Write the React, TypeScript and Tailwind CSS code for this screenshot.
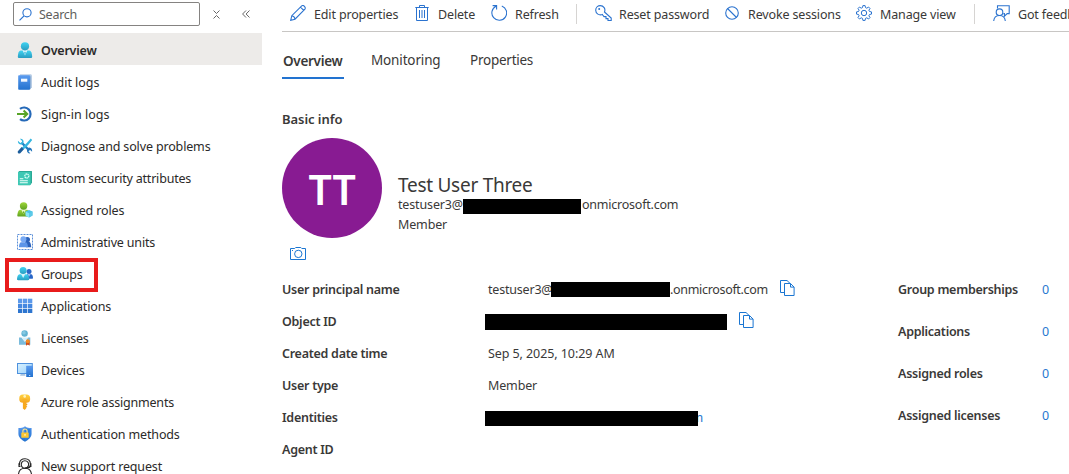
import React from "react";

type IconProps = { children: React.ReactNode; w?: number; h?: number };

function Svg({ children, w = 16, h = 16 }: IconProps) {
  return (
    <svg width={w} height={h} viewBox={`0 0 ${w} ${h}`} fill="none" className="block shrink-0">
      {children}
    </svg>
  );
}

const BLUE = "#2b73cf";

function Gradients() {
  return (
    <svg width="0" height="0" className="absolute">
      <defs>
        <linearGradient id="cyan" x1="0" y1="0" x2="0" y2="1">
          <stop offset="0" stopColor="#3fd3f2" />
          <stop offset="1" stopColor="#2a9cc0" />
        </linearGradient>
        <linearGradient id="blue" x1="0" y1="0" x2="0" y2="1">
          <stop offset="0" stopColor="#5b9bef" />
          <stop offset="1" stopColor="#2272cf" />
        </linearGradient>
        <linearGradient id="green" x1="0" y1="0" x2="0" y2="1">
          <stop offset="0" stopColor="#9fd63a" />
          <stop offset="1" stopColor="#5ea11f" />
        </linearGradient>
        <linearGradient id="gold" x1="0" y1="0" x2="0" y2="1">
          <stop offset="0" stopColor="#ffd23f" />
          <stop offset="1" stopColor="#f5a623" />
        </linearGradient>
        <linearGradient id="screen" x1="0" y1="0" x2="1" y2="1">
          <stop offset="0" stopColor="#d9f1ff" />
          <stop offset="1" stopColor="#9ad2fb" />
        </linearGradient>
      </defs>
    </svg>
  );
}

const UserIcon = () => (
  <Svg>
    <path d="M3.600 8.500h8.800c1.600 0 2.600 2.500 2.800 5.900 0 .9-.6 1.600-1.500 1.600H2.300C1.400 16 .8 15.300.8 14.400 1 11 2 8.500 3.600 8.500Z" fill="url(#cyan)" />
    <path d="M5.600 8.300 8 13.500l2.400-5.200Z" fill="#e3f7fc" />
    <path d="m8 9.500-.8 1 .8 3 .8-3Z" fill="#35b5d8" />
    <circle cx="8" cy="4.300" r="4.100" fill="url(#cyan)" />
  </Svg>
);

const BookIcon = () => (
  <Svg>
    <path d="M3 .3h11.400v12.900L13 15.500H3Z" fill="#b7cde6" />
    <path d="M13 2.500 14.500 1v12.500L13 15.500Z" fill="#8fb0d6" />
    <rect x="1.200" y="1.300" width="11.800" height="14.500" rx=".8" fill="url(#blue)" />
    <rect x="4" y="4.700" width="6.300" height="3" fill="#f2f8ff" />
  </Svg>
);

const SignInIcon = () => (
  <Svg>
    <path d="M3 2.900A6.500 6.500 0 1 1 3 13.100" stroke="#2569b8" strokeWidth="2.200" />
    <path d="M0 8h9.600M6.600 4.500 10.200 8l-3.600 3.500" stroke="#58a428" strokeWidth="2.100" />
  </Svg>
);

const ToolsIcon = () => (
  <Svg>
    <path d="m4.500 4.500 7.800 8" stroke="#237fc2" strokeWidth="2.400" />
    <path d="M.9 2.700 3.300 5l1.500-.4L5.100 3 2.900.8C4.900.3 6.900 1.700 6.600 4.300L5.300 6.200C3 7 .5 5.300.9 2.700Z" fill="#32b5df" />
    <path d="m10.300 10.200 2-.6c2 .2 3.200 2 2.800 4.200L13.200 12l-1.400.3-.2 1.400 1.900 1.600c-2 .5-3.600-.8-3.500-2.800Z" fill="#2376bb" />
    <path d="M13.700.6 15.200 2l-3.600 4.400-5 5L4.800 9.700l5.200-5Z" fill="#36b7e0" />
    <path d="m4.600 9 2.300 2.300-3.600 3.900c-1.400 1.200-3.600-.8-2.200-2.300Z" fill="#1d5d9b" />
  </Svg>
);

const AttributesIcon = () => (
  <Svg>
    <path d="M2.300 1h12.200c.3 0 .5.200.5.500v11.300L13 15.200H1.500L1 14.500V2.300Z" fill="#2aa995" />
    <path d="M1 2h12.600v13H1Z" fill="#3ec8b4" />
    <circle cx="9.800" cy="6" r="2" stroke="#d9fff8" strokeWidth="1.300" strokeDasharray="1.400 .4" />
    <path d="M2.800 8.700h3.500M2.800 10.700h8M2.800 12.700h8" stroke="#effffc" strokeWidth="1.100" />
  </Svg>
);

const RolesIcon = () => (
  <Svg>
    <path d="M3 7.800h7.200c1.500 0 2.400 2.200 2.800 6.700H1.400c-.8 0-1.200-.5-1.100-1.300C.7 10 1.500 7.800 3 7.800Z" fill="url(#green)" />
    <path d="m4.300 7.700 2.300 4.500 2.200-4.500Z" fill="#eafbcf" />
    <path d="m6.600 9-.7 1 .7 2.200.7-2.200Z" fill="#65a924" />
    <circle cx="6.600" cy="4" r="3.700" fill="url(#green)" />
    <path d="m12 8 3.500 1.500v4L12 15.500l-3.400-2v-4Z" fill="#4cc4e6" />
    <path d="m8.600 9.500 3.400 1.700v4.300l-3.400-2Z" fill="#8ae4f5" />
    <path d="m12 11.200 3.500-1.700v4L12 15.500Z" fill="#5dc9e8" />
  </Svg>
);

const UnitsIcon = () => (
  <Svg>
    <rect x=".5" y=".5" width="15" height="15" stroke="#5a8fd8" strokeDasharray="2 1" />
    <circle cx="10.300" cy="5.600" r="2.700" fill="#2b62bb" />
    <path d="M8 7.800h4.500c1.200 1 1.600 3 1.700 5.400H9Z" fill="#2b62bb" />
    <circle cx="6.400" cy="5.300" r="3" fill="#78aaf4" />
    <path d="M3.700 8.200h5.500c1.400 1.200 1.600 3 1.700 5H2c0-2.300.4-3.800 1.700-5Z" fill="#5c95e8" />
  </Svg>
);

const GroupsIcon = () => (
  <Svg>
    <circle cx="12" cy="5.500" r="2.500" fill="#2966c7" />
    <path d="M10 8.200h4.200c1 0 1.700 1.500 1.800 3.500 0 .6-.4 1-.9 1H10Z" fill="#2966c7" />
    <path d="m10.800 8.200 1.300 2.500 1.200-2.500Z" fill="#b5d4fb" />
    <path d="M2.600 8.200h7c1.500 0 2.500 2.300 2.600 4.900 0 .8-.4 1.200-1.200 1.200H1.200c-.8 0-1.200-.4-1.200-1.200C.1 10.500 1 8.200 2.600 8.200Z" fill="url(#cyan)" />
    <path d="m4 8.100 2.200 4 2.100-4Z" fill="#d5f5fc" />
    <circle cx="6.100" cy="4.600" r="3.500" fill="url(#cyan)" />
  </Svg>
);

const AppsIcon = () => (
  <Svg>
    {[0, 1, 2].map((r) =>
      [0, 1, 2].map((c) => (
        <rect key={`${r}${c}`} x={1 + c * 5} y={0.7 + r * 5} width="4.300" height="4.300" fill={["#5b99eb", "#4487e0", "#2d75cf"][r]} />
      )),
    )}
  </Svg>
);

const LicensesIcon = () => (
  <Svg>
    <path d="M2 7.500h2.500L8 12l3-4.500h2.300v7.300H2Z" fill="#7abbdc" />
    <path d="M4.200 7.500h6.800L7.700 11.400Z" fill="#d6effa" />
    <circle cx="7.600" cy="3.500" r="3.200" fill="#62b3d3" />
    <circle cx="7" cy="2.800" r="1.800" fill="#85c9e2" />
    <path d="M9 10.500h3.600v5.200L10.800 14.600 9 15.700Z" fill="#d34b16" />
    <circle cx="10.800" cy="11.200" r="2" fill="#f28b23" />
  </Svg>
);

const DevicesIcon = () => (
  <Svg>
    <path d="M4 11.500h4l.5 2.300H3Z" fill="#aac5df" />
    <rect x=".5" y="1.500" width="14.800" height="10" fill="url(#screen)" stroke="#4e91de" />
    <rect x="9.200" y="3.700" width="6.800" height="11.300" rx=".5" fill="url(#blue)" />
    <path d="M12 13.500h1.300" stroke="#b8d6fc" />
  </Svg>
);

const KeyIcon = () => (
  <Svg>
    <path d="M5.900 8h3.500v6l-1.700 2-1.800-1.600Z" fill="#f7a91e" />
    <path d="M9 9.800h1.300v1.100H9v.8h1.100v1H9Z" fill="#f0a01c" />
    <rect x="2.300" y=".5" width="10.800" height="8.300" rx="3.600" fill="url(#gold)" />
    <path d="M5.500 7.500h4.300M5.500 5.800h4.300" stroke="#f8a91e" strokeWidth=".8" />
    <circle cx="7.700" cy="2.400" r="1.300" fill="#fff3c0" />
  </Svg>
);

const ShieldIcon = () => (
  <Svg>
    <path d="M8 .3c1.800 1.500 4 1.800 6.600 1.800v5.500c0 4-3.200 6.300-6.600 8.100C4.500 13.900 1.400 11.600 1.400 7.600V2.100C4 2.100 6.200 1.800 8 .3Z" fill="url(#blue)" />
    <path d="M8 1.600c1.600 1.100 3.500 1.500 5.500 1.600v4.400c0 3.200-2.600 5.200-5.500 6.800Z" fill="#2f7fdd" />
    <path d="M5.900 7V5.100a2.100 2.100 0 0 1 4.200 0V7" stroke="#ffe489" strokeWidth="1.100" />
    <rect x="4.300" y="6.500" width="7.400" height="5.300" rx=".5" fill="#fbc632" />
    <circle cx="8" cy="8.900" r=".8" fill="#fff4ca" />
  </Svg>
);

const SupportIcon = () => (
  <Svg>
    <g stroke="#262626" strokeWidth="1.100">
      <path d="M2.500 7.300V5.200C2.900 2.400 5 .8 8 .8c3.300 0 5.400 2 5.400 5.300v.8c0 2-1 3-3 3H8.300" />
      <path d="M4.400 7.700c-.7-3 1-5 3.500-5s4.300 2 3.600 4.800C11 9.300 9.700 10.300 8 10.300c-1.800 0-3.200-1-3.600-2.600Z" />
      <path d="M1.500 16c.4-3.500 3-5.700 6.500-5.700s6 2.200 6.500 5.700" />
      <path d="M2 5.200v3.200h1.500M13.900 5.200v3.200h-1.500" />
    </g>
  </Svg>
);

const PencilIcon = () => (
  <Svg>
    <path d="m.7 15.300 1.100-4.600L11.700.9c1.800-1.300 4.400 1.300 3.200 3.200L5 14.200ZM10.500 2.100l3.200 3.200M1.800 10.700c1.800.2 3 1.500 3.200 3.500" stroke={BLUE} strokeWidth="1.100" />
  </Svg>
);

const TrashIcon = () => (
  <Svg w={14} h={16}>
    <path d="M.3 2.500h13.400M4.500 2.500v-2h5v2M1.500 2.500v13h11v-13M4.500 5v8M7 5v8m2.500-8v8" stroke={BLUE} />
  </Svg>
);

const RefreshIcon = () => (
  <Svg>
    <path d="M10.800.9A7.400 7.400 0 1 1 5 1.200M1.600.6h4v4" stroke={BLUE} strokeWidth="1.100" />
  </Svg>
);

const ResetKeyIcon = () => (
  <Svg w={17}>
    <path d="M8 9.200C4 11 .7 8.500.7 5.300.7 2.500 2.900.6 5.300.6c3.300 0 5.500 3.200 4.200 6.400l6.700 6v2.500H13v-1.900h-2v-2H9L7.300 9.500" stroke={BLUE} strokeWidth="1.100" />
    <circle cx="4.200" cy="3.900" r="1" fill={BLUE} />
  </Svg>
);

const BlockIcon = () => (
  <Svg w={14} h={14}>
    <circle cx="7" cy="7" r="6.300" stroke={BLUE} strokeWidth="1.100" />
    <path d="m2.500 2.500 9 9" stroke={BLUE} strokeWidth="1.100" />
  </Svg>
);

const GearIcon = () => (
  <Svg>
    <path
      d="M6.900.6h2.200l.4 2 1.300.6 1.700-1.200L14 3.500l-1.100 1.700.6 1.300 2 .4v2.200l-2 .4-.6 1.300 1.100 1.700-1.500 1.500-1.700-1.200-1.300.6-.4 2H6.900l-.4-2-1.300-.6L3.500 14 2 12.500l1.100-1.700-.6-1.300-2-.4V6.900l2-.4.6-1.300L2 3.500 3.500 2l1.700 1.200 1.300-.6Z"
      stroke={BLUE}
    />
    <circle cx="8" cy="8" r="2.700" stroke={BLUE} />
  </Svg>
);

const FeedbackIcon = () => (
  <Svg w={17} h={17}>
    <g stroke={BLUE} strokeWidth="1.100">
      <path d="M4.500 3.500V.8h11.700v7.800h-2l-2.800 2.600V8.600h-1" />
      <circle cx="6.500" cy="7.200" r="3.300" />
      <path d="M.7 16c.3-3.500 2.600-5.500 5.800-5.500s5.500 2 5.800 5.500" />
    </g>
  </Svg>
);

const CameraIcon = () => (
  <Svg w={16} h={13}>
    <path d="M.5 1.500h4.200l1-1h5.100l1 1h3.700v11H.5Z" stroke="#1b76d2" />
    <circle cx="8.300" cy="6.900" r="3.700" stroke="#1b76d2" />
    <path d="M2 3.500h1" stroke="#1b76d2" />
  </Svg>
);

const CopyIcon = () => (
  <Svg w={15} h={16}>
    <path d="M4.500 12.500h-4V.5H7L10 3.400M4.500 3.500h6l3.600 3.600v8.400H4.500ZM10.500 3.500v3.600h3.600" stroke="#1b76d2" />
  </Svg>
);

const SearchIcon = () => (
  <Svg w={13} h={13}>
    <circle cx="8" cy="4.800" r="4.100" stroke={BLUE} strokeWidth="1.100" />
    <path d="M5 7.800.5 12.300" stroke={BLUE} strokeWidth="1.200" />
  </Svg>
);

const NAV = [
  { label: "Overview", icon: <UserIcon />, cls: "font-semibold tracking-[-0.2px]" },
  { label: "Audit logs", icon: <BookIcon />, cls: "tracking-[-0.05px]" },
  { label: "Sign-in logs", icon: <SignInIcon />, cls: "tracking-[0.03px]" },
  { label: "Diagnose and solve problems", icon: <ToolsIcon />, cls: "" },
  { label: "Custom security attributes", icon: <AttributesIcon />, cls: "tracking-[-0.2px]" },
  { label: "Assigned roles", icon: <RolesIcon />, cls: "" },
  { label: "Administrative units", icon: <UnitsIcon />, cls: "tracking-[-0.17px]" },
  { label: "Groups", icon: <GroupsIcon />, cls: "tracking-[-0.25px]" },
  { label: "Applications", icon: <AppsIcon />, cls: "" },
  { label: "Licenses", icon: <LicensesIcon />, cls: "tracking-[-0.25px]" },
  { label: "Devices", icon: <DevicesIcon />, cls: "" },
  { label: "Azure role assignments", icon: <KeyIcon />, cls: "tracking-[-0.2px]" },
  { label: "Authentication methods", icon: <ShieldIcon />, cls: "" },
  { label: "New support request", icon: <SupportIcon />, cls: "tracking-[-0.15px]" },
];

function Sidebar() {
  return (
    <aside className="w-[262px] shrink-0 text-[#2b2a29]">
      <div className="flex h-[33px] items-start pl-[13px] pt-[2px]">
        <div className="flex h-6 w-[187px] items-center gap-[7px] rounded-[2px] border border-[#858381] pl-[5px] text-[#605e5c]">
          <SearchIcon />
          <span className="pt-px tracking-[-0.25px]">Search</span>
        </div>
        <div className="ml-[13px] mt-2">
          <Svg w={7} h={9}>
            <path d="m.5.5 3 3 3-3M.5 8.500l3-3 3 3" stroke="#555" strokeWidth=".9" />
          </Svg>
        </div>
        <div className="ml-[22px] mt-2">
          <Svg w={8} h={8}>
            <path d="M4 .5.6 4 4 7.500M7.500.5 4.100 4l3.400 3.500" stroke="#555" strokeWidth=".9" />
          </Svg>
        </div>
      </div>
      <nav>
        {NAV.map((n, i) => (
          <div key={n.label} className={`relative flex h-8 items-center gap-2 pl-[17px] pt-[2px] ${i === 0 ? "bg-[#edebe9]" : ""}`}>
            {n.icon}
            <span className={`pt-[2px] ${n.cls}`}>{n.label}</span>
            {n.label === "Groups" && <span className="absolute left-[5px] top-px h-[34px] w-[93px] border-4 border-[#e81b1b]" />}
          </div>
        ))}
      </nav>
    </aside>
  );
}

function Command({ icon, iconBox, label, width }: { icon: React.ReactNode; iconBox: string; label: string; width: string }) {
  return (
    <div className={`flex shrink-0 items-center ${width}`}>
      <span className={`shrink-0 pb-px ${iconBox}`}>{icon}</span>
      <span className="pt-[2px]">{label}</span>
    </div>
  );
}

function Toolbar() {
  return (
    <div className="flex h-8 items-center overflow-hidden border-b border-[#c8c6c4] pb-[4px] pl-[8px]">
      <Command icon={<PencilIcon />} iconBox="w-[24px]" label="Edit properties" width="w-[125px]" />
      <Command icon={<TrashIcon />} iconBox="w-[23px]" label="Delete" width="w-[76px]" />
      <Command icon={<RefreshIcon />} iconBox="w-[24px]" label="Refresh" width="w-[85px]" />
      <div className="mr-[18px] h-5 w-px shrink-0 bg-[#d6d4d2]" />
      <Command icon={<ResetKeyIcon />} iconBox="w-[24px]" label="Reset password" width="w-[130px]" />
      <Command icon={<BlockIcon />} iconBox="w-[23px]" label="Revoke sessions" width="w-[131px]" />
      <Command icon={<GearIcon />} iconBox="w-[24px]" label="Manage view" width="w-[118px]" />
      <div className="mr-[18px] h-5 w-px shrink-0 bg-[#d6d4d2]" />
      <Command icon={<FeedbackIcon />} iconBox="w-[25px]" label="Got feedback?" width="w-[120px]" />
    </div>
  );
}

function Redacted({ cls }: { cls: string }) {
  return <span className={`shrink-0 bg-black ${cls}`} />;
}

function Field({ label, children }: { label: string; children?: React.ReactNode }) {
  return (
    <div className="flex h-8 items-center">
      <span className="w-[206px] shrink-0 pt-[2px] font-semibold tracking-[-0.27px]">{label}</span>
      {children}
    </div>
  );
}

const COUNTS = ["Group memberships", "Applications", "Assigned roles", "Assigned licenses"];

export default function App() {
  return (
    <div className="flex h-[474px] w-[1069px] overflow-hidden whitespace-nowrap bg-white font-['Noto_Sans','Open_Sans',sans-serif] text-[12.5px] leading-4 tracking-[-0.15px] text-[#3a3938]">
      <Gradients />
      <Sidebar />
      <main className="ml-5 min-w-0 flex-1">
        <Toolbar />
        <div className="flex h-[47px] text-[13.5px]">
          <div className="mr-[27px] h-[47px] w-[62px] border-b-2 border-[#2273d0] pl-px pt-[21px] font-semibold tracking-[-0.3px]">Overview</div>
          <div className="w-[99px] pt-[20px]">Monitoring</div>
          <div className="pt-[20px] tracking-[-0.25px]">Properties</div>
        </div>
        <h2 className="mt-[32px] text-[13px] font-semibold tracking-[-0.05px]">Basic info</h2>
        <div className="mt-[11px] flex">
          <div className="flex size-[100px] shrink-0 items-center justify-center rounded-full bg-[#881b92] pt-[2px] text-[41px] font-semibold leading-none tracking-[-0.3px] text-white">TT</div>
          <div className="ml-4 pt-[35px]">
            <div className="h-[23px] text-[19px] leading-6 tracking-[-0.27px]">Test User Three</div>
            <div className="flex h-[18px] items-center">
              <span className="w-[65px]">testuser3@</span>
              <Redacted cls="mt-[2px] h-[15px] w-[118px]" />
              <span className="ml-px tracking-[-0.23px]">onmicrosoft.com</span>
            </div>
            <div className="mt-[3px] leading-[16px]">Member</div>
          </div>
        </div>
        <div className="flex h-[35px] pl-2 pt-[9px]">
          <CameraIcon />
        </div>
        <div className="flex">
          <div className="w-[616px]">
            <Field label="User principal name">
              <span className="w-[63px] pt-[2px] tracking-[-0.2px]">testuser3@</span>
              <Redacted cls="mt-px h-[15px] w-[119px]" />
              <span className="w-[110px] pt-[2px] tracking-[-0.32px]">.onmicrosoft.com</span>
              <span className="pb-[2px]">
                <CopyIcon />
              </span>
            </Field>
            <Field label="Object ID">
              <Redacted cls="-ml-[3px] mt-[2px] h-4 w-[242px]" />
              <span className="ml-3 pb-[2px]">
                <CopyIcon />
              </span>
            </Field>
            <Field label="Created date time">
              <span className="pt-[2px] tracking-[-0.08px]">Sep 5, 2025, 10:29 AM</span>
            </Field>
            <Field label="User type">
              <span className="pt-[2px]">Member</span>
            </Field>
            <Field label="Identities">
              <Redacted cls="-ml-[3px] mt-[3px] h-[15px] w-[213px]" />
              <span className="flex w-[5px] justify-end overflow-hidden pt-[2px] text-[#2878d0]">m</span>
            </Field>
            <Field label="Agent ID" />
          </div>
          <div className="-mt-[5px]">
            {COUNTS.map((c) => (
              <div key={c} className="flex h-[42px] items-center pt-[2px]">
                <span className="w-[144px] font-semibold tracking-[-0.27px]">{c}</span>
                <span className="text-[#2878d0]">0</span>
              </div>
            ))}
          </div>
        </div>
      </main>
    </div>
  );
}
